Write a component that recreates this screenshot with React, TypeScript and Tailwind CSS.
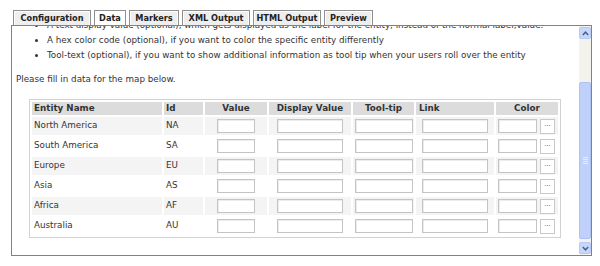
const tabs = [
  { label: 'Configuration', w: 'w-[78px]', active: false },
  { label: 'Data', w: 'w-[32px]', active: true },
  { label: 'Markers', w: 'w-[50px]', active: false },
  { label: 'XML Output', w: 'w-[68px]', active: false },
  { label: 'HTML Output', w: 'w-[68px]', active: false },
  { label: 'Preview', w: 'w-[49px]', active: false },
]

const rows = [
  ['North America', 'NA'],
  ['South America', 'SA'],
  ['Europe', 'EU'],
  ['Asia', 'AS'],
  ['Africa', 'AF'],
  ['Australia', 'AU'],
]

function Box({ className }: { className: string }) {
  return (
    <div
      className={`h-[14px] border border-[#c4c4c4] bg-white shadow-[inset_1px_1px_0_#ececec] ${className}`}
    />
  )
}

function Arrow({ up }: { up: boolean }) {
  return (
    <svg width="7" height="5" viewBox="0 0 7 5">
      <polyline
        points={up ? '0.8,4 3.5,1.2 6.2,4' : '0.8,1 3.5,3.8 6.2,1'}
        fill="none"
        stroke="#4d6185"
        strokeWidth="1.5"
      />
    </svg>
  )
}

function Scrollbar() {
  return (
    <div className="flex w-[12px] flex-col bg-[#f3f2ec] py-px">
      <div className="flex h-[12px] items-center justify-center rounded-[2px] border border-[#b7c9f4] bg-[#c6d7fd]">
        <Arrow up />
      </div>
      <div className="h-[43px]" />
      <div className="flex h-[157px] flex-col items-center justify-center gap-px rounded-[2px] border border-[#aec2f1] bg-[#bfd1fb]">
        <div className="h-px w-[5px] bg-[#e4ecff]" />
        <div className="h-px w-[5px] bg-[#e4ecff]" />
        <div className="h-px w-[5px] bg-[#e4ecff]" />
        <div className="h-px w-[5px] bg-[#e4ecff]" />
      </div>
      <div className="flex-1" />
      <div className="flex h-[12px] items-center justify-center rounded-[2px] border border-[#b7c9f4] bg-[#c6d7fd]">
        <Arrow up={false} />
      </div>
    </div>
  )
}

export default function App() {
  return (
    <div className="h-[266px] w-[600px] overflow-hidden bg-white font-['DejaVu_Sans',sans-serif] text-[8.75px] text-[#333]">
      <div className="flex h-[25px] gap-[3px] pl-[13px] pt-[10px]">
        {tabs.map((t) => (
          <div
            key={t.label}
            className={`flex h-[15px] items-center justify-center border border-b-0 border-[#8f8f8f] text-[8.2px] font-bold text-[#222] shadow-[inset_1px_1px_0_#fff,inset_-1px_0_0_#fff] ${t.w} ${
              t.active ? 'bg-white' : 'bg-[#eeeeee]'
            }`}
          >
            {t.label}
          </div>
        ))}
      </div>

      <div className="ml-[11px] flex h-[231px] w-[581px] border border-[#828282]">
        <div className="flex-1 overflow-hidden pl-[4px]">
          <ul className="-mt-[8px] list-disc whitespace-nowrap pl-[31px] leading-[15px]">
            <li>
              A text display value (optional), which gets displayed as the label for the entity, instead of the normal label;value.
            </li>
            <li>A hex color code (optional), if you want to color the specific entity differently</li>
            <li>
              Tool-text (optional), if you want to show additional information as tool tip when your users roll over the entity
            </li>
          </ul>
          <p className="mt-[9px] leading-[15px]">Please fill in data for the map below.</p>

          <div className="ml-[13px] mt-[12px] grid w-max grid-cols-[130px_39px_62px_82px_61px_78px_62px] gap-[2px] border border-[#d2d2d2] p-[2px]">
            <div className="flex h-[13px] items-center bg-[#dcdcdc] pl-[2px] font-bold">Entity Name</div>
            <div className="flex h-[13px] items-center bg-[#dcdcdc] pl-[2px] font-bold">Id</div>
            <div className="flex h-[13px] items-center justify-center bg-[#dcdcdc] font-bold">Value</div>
            <div className="flex h-[13px] items-center justify-center bg-[#dcdcdc] font-bold">Display Value</div>
            <div className="flex h-[13px] items-center justify-center bg-[#dcdcdc] font-bold">Tool-tip</div>
            <div className="flex h-[13px] items-center bg-[#dcdcdc] pl-[3px] font-bold">Link</div>
            <div className="flex h-[13px] items-center justify-center bg-[#dcdcdc] font-bold">Color</div>

            {rows.map(([name, id], i) => {
              const bg = i % 2 === 0 ? 'bg-[#f4f4f4]' : 'bg-white'
              return [
                <div key={name + 'n'} className={`flex h-[18px] items-center pl-[2px] ${bg}`}>
                  {name}
                </div>,
                <div key={name + 'i'} className={`flex h-[18px] items-center pl-[2px] ${bg}`}>
                  {id}
                </div>,
                <div key={name + 'v'} className={`flex h-[18px] items-center justify-center ${bg}`}>
                  <Box className="w-[38px]" />
                </div>,
                <div key={name + 'd'} className={`flex h-[18px] items-center justify-center ${bg}`}>
                  <Box className="w-[66px]" />
                </div>,
                <div key={name + 't'} className={`flex h-[18px] items-center pl-[2px] ${bg}`}>
                  <Box className="w-[58px]" />
                </div>,
                <div key={name + 'l'} className={`flex h-[18px] items-center justify-center ${bg}`}>
                  <Box className="w-[66px]" />
                </div>,
                <div key={name + 'c'} className={`flex h-[18px] items-center gap-[3px] pl-[2px] ${bg}`}>
                  <Box className="w-[39px]" />
                  <div className="flex h-[15px] w-[15px] items-center justify-center border border-[#c8c8c8] bg-white pb-[3px] text-[7px] leading-none text-[#555]">
                    ...
                  </div>
                </div>,
              ]
            })}
          </div>
        </div>
        <Scrollbar />
      </div>
    </div>
  )
}
